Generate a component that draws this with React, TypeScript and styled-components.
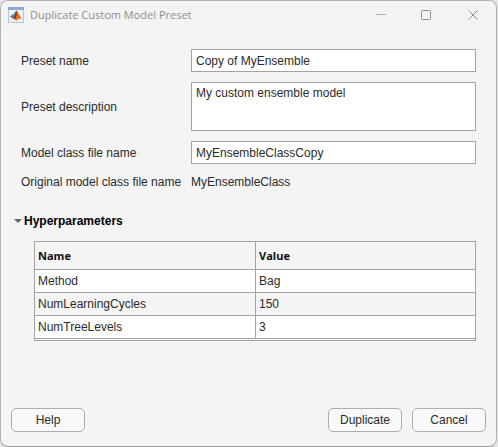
import React from "react";
import styled, { createGlobalStyle } from "styled-components";

const line = "#a3a3a3";

const GlobalStyle = createGlobalStyle`
  * { box-sizing: border-box; }
  body {
    margin: 0;
    background: #e6e6e6;
    color: #2b2b2b;
    font: 12px/16px "Liberation Sans", Arial, sans-serif;
  }
`;

const Window = styled.div`
  display: flex;
  flex-direction: column;
  min-height: 100vh;
  margin-right: 1px;
  border: 1px solid #b0b0b0;
  border-bottom-color: #9c9c9c;
  border-radius: 8px;
  background: #f4f4f4;
  overflow: hidden;
`;

const TitleBar = styled.header`
  display: flex;
  align-items: center;
  height: 28px;
  padding: 0 17px 0 7px;
  background: #f3f3f3;
`;

const Title = styled.h1`
  flex: 1;
  margin: 0 0 0 6px;
  color: #8f8f8f;
  font: 11px/16px "Open Sans", "Noto Sans", sans-serif;
`;

const WindowControls = styled.div`
  display: flex;
  gap: 34px;
`;

const ControlButton = styled.button`
  display: flex;
  padding: 0;
  border: 0;
  background: none;
  color: #8f8f8f;
`;

const Content = styled.main`
  flex: 1;
  padding: 20px 20px 24px 13px;
`;

const Form = styled.form`
  display: grid;
  grid-template-columns: 163px 1fr;
  align-items: center;
  gap: 10px 7px;
  margin-left: 7px;
`;

const Label = styled.label``;

const TextField = styled.input`
  width: 100%;
  height: 23px;
  padding: 0 4px;
  border: 1px solid ${line};
  border-radius: 0;
  background: #fff;
  color: inherit;
  font: inherit;
  outline: none;
`;

const TextArea = styled.textarea`
  display: block;
  width: 100%;
  height: 49px;
  padding: 2px 4px;
  border: 1px solid ${line};
  border-radius: 0;
  background: #fff;
  color: inherit;
  font: inherit;
  outline: none;
  resize: none;
`;

const Output = styled.output``;

const SectionToggle = styled.button`
  display: flex;
  align-items: center;
  gap: 2px;
  margin-top: 23px;
  padding: 0;
  border: 0;
  background: none;
  color: #000;
  font: bold 12px/16px "Liberation Sans", Arial, sans-serif;
`;

const TableFrame = styled.div`
  margin: 12px 0 0 20px;
  padding-bottom: 1px;
  border: 1px solid ${line};
`;

const Table = styled.table`
  width: 100%;
  border-collapse: separate;
  border-spacing: 0;
  table-layout: fixed;
`;

const Cell = styled.td`
  height: 23px;
  padding: 0 3px;
  border-bottom: 1px solid ${line};
  & + & { border-left: 1px solid ${line}; }
`;

const HeaderCell = styled.th`
  height: 28px;
  padding: 0 3px;
  border-bottom: 1px solid ${line};
  color: #111;
  font: bold 11px/16px "Open Sans", "Noto Sans", sans-serif;
  text-align: left;
  & + & { border-left: 1px solid ${line}; }
`;

const Row = styled.tr<{ $striped: boolean }>`
  background: ${(p) => (p.$striped ? "#f4f4f4" : "#fff")};
`;

const Footer = styled.footer`
  display: flex;
  gap: 10px;
  padding: 0 10px 14px;
`;

const Button = styled.button<{ $pushRight?: boolean }>`
  width: 74px;
  height: 24px;
  margin-right: ${(p) => (p.$pushRight ? "auto" : "0")};
  padding: 0;
  border: 1px solid #adadad;
  border-radius: 5px;
  background: #f8f8f8;
  color: inherit;
  font: inherit;
`;

const AppIcon = () => (
  <svg width="16" height="16" viewBox="0 0 16 16" aria-hidden="true">
    <rect x="0.5" y="0.5" width="15" height="15" fill="#f0f2f5" stroke="#bcc3cc" />
    <rect width="16" height="3" fill="#86abd6" />
    <path d="M2 9.3 5.2 7.6 8.6 3.6 7.8 10.4 4.8 11.6Z" fill="#32678e" />
    <path d="M5.2 7.6 8.6 3.6 7.2 9 4.8 11.4 4 10.5Z" fill="#4b93b6" />
    <path d="M8.6 3.6C10.4 4.4 11.6 9.8 14.2 12.2 11.6 10.6 10.2 11.4 8 14 7.4 12.3 6.4 11.4 4.9 11.4 7.4 9.8 7.7 6 8.6 3.6Z" fill="#e86e22" />
    <path d="M8.6 3.6C9 7.2 8.6 10.6 6.9 12.1 6.4 11.5 5.6 11.4 4.9 11.4 7.4 9.8 7.7 6 8.6 3.6Z" fill="#8a2b1d" />
  </svg>
);

const rows = [
  ["Method", "Bag"],
  ["NumLearningCycles", "150"],
  ["NumTreeLevels", "3"],
];

export default function App() {
  const [open, setOpen] = React.useState(true);

  return (
    <>
      <GlobalStyle />
      <Window role="dialog" aria-labelledby="dialog-title">
        <TitleBar>
          <AppIcon />
          <Title id="dialog-title">Duplicate Custom Model Preset</Title>
          <WindowControls>
            <ControlButton type="button" aria-label="Minimize">
              <svg width="12" height="12" viewBox="0 0 12 12" stroke="#b0b0b0">
                <path d="M1 5.5H11" />
              </svg>
            </ControlButton>
            <ControlButton type="button" aria-label="Maximize">
              <svg width="12" height="12" viewBox="0 0 12 12" fill="none" stroke="currentColor">
                <rect x="0.5" y="1.5" width="9" height="9" rx="1" />
              </svg>
            </ControlButton>
            <ControlButton type="button" aria-label="Close">
              <svg width="12" height="12" viewBox="0 0 12 12" stroke="currentColor">
                <path d="M1.5 1.5 10.5 10.5M10.5 1.5 1.5 10.5" />
              </svg>
            </ControlButton>
          </WindowControls>
        </TitleBar>
        <Content>
          <Form id="preset-form" onSubmit={(e) => e.preventDefault()}>
            <Label htmlFor="preset-name">Preset name</Label>
            <TextField id="preset-name" defaultValue="Copy of MyEnsemble" />
            <Label htmlFor="preset-description">Preset description</Label>
            <TextArea id="preset-description" defaultValue="My custom ensemble model" />
            <Label htmlFor="class-file">Model class file name</Label>
            <TextField id="class-file" defaultValue="MyEnsembleClassCopy" />
            <Label htmlFor="original-file">Original model class file name</Label>
            <Output id="original-file">MyEnsembleClass</Output>
          </Form>
          <SectionToggle type="button" aria-expanded={open} onClick={() => setOpen(!open)}>
            <svg width="8" height="8" viewBox="0 0 8 8" aria-hidden="true">
              <path d={open ? "M0 2H8L4 6Z" : "M2 0V8L6 4Z"} fill="#666" />
            </svg>
            Hyperparameters
          </SectionToggle>
          {open && (
            <TableFrame>
              <Table>
                <thead>
                  <tr>
                    <HeaderCell scope="col">Name</HeaderCell>
                    <HeaderCell scope="col">Value</HeaderCell>
                  </tr>
                </thead>
                <tbody>
                  {rows.map(([name, value], i) => (
                    <Row key={name} $striped={i % 2 === 1}>
                      <Cell>{name}</Cell>
                      <Cell>{value}</Cell>
                    </Row>
                  ))}
                </tbody>
              </Table>
            </TableFrame>
          )}
        </Content>
        <Footer>
          <Button type="button" $pushRight>Help</Button>
          <Button type="submit" form="preset-form">Duplicate</Button>
          <Button type="button">Cancel</Button>
        </Footer>
      </Window>
    </>
  );
}
